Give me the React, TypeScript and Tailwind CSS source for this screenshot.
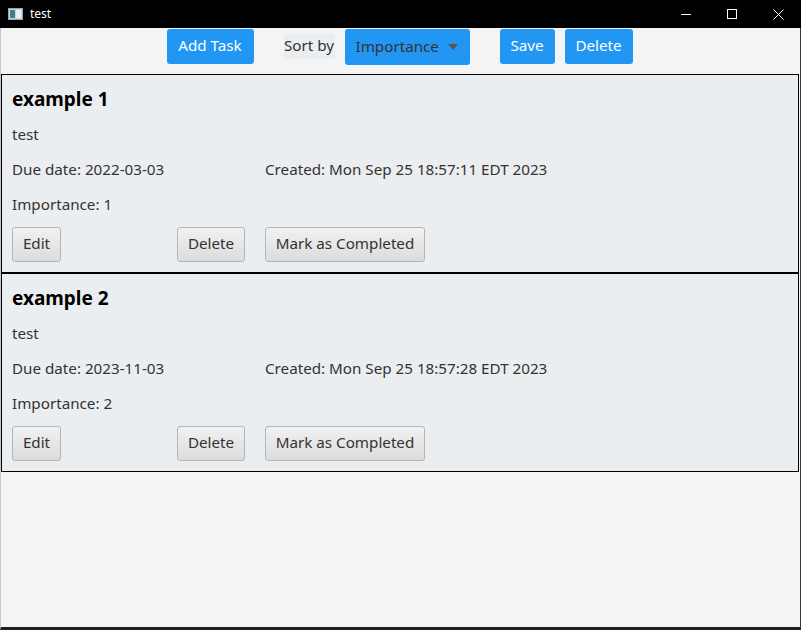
import React from "react";

const font = { fontFamily: '"Noto Sans", "Open Sans", sans-serif' };

function GrayButton({ children, className = "" }: { children: React.ReactNode; className?: string }) {
  return (
    <div
      className={`h-[35px] pb-[2px] flex items-center justify-center whitespace-nowrap rounded-[3px] border border-[#b5b5b5] bg-gradient-to-b from-[#f1f1f1] to-[#dcdcdc] text-[15.2px] text-[#333333] ${className}`}
    >
      {children}
    </div>
  );
}

function Card({ title, due, created, importance }: { title: string; due: string; created: string; importance: number }) {
  return (
    <div className="border border-black bg-[#ebeef1] px-[10px] pt-[8px] pb-[10px]">
      <div className="h-[35px] pb-[3px] flex items-center text-[19px] font-bold text-black">{title}</div>
      <div className="h-[35px] pb-[3px] flex items-center text-[15.2px] text-[#333333]">test</div>
      <div className="h-[35px] pb-[3px] flex items-center text-[15.2px] text-[#333333] whitespace-nowrap">
        <div className="w-[253px]">Due date: {due}</div>
        <div>Created: {created}</div>
      </div>
      <div className="h-[35px] pb-[3px] flex items-center text-[15.2px] text-[#333333]">Importance: {importance}</div>
      <div className="mt-[4px] flex items-center">
        <GrayButton className="w-[49px]">Edit</GrayButton>
        <GrayButton className="w-[68px] ml-[116px]">Delete</GrayButton>
        <GrayButton className="w-[160px] ml-[20px]">Mark as Completed</GrayButton>
      </div>
    </div>
  );
}

export default function App() {
  return (
    <div className="w-[801px] h-[630px] bg-black flex flex-col" style={font}>
      <div className="h-[28px] flex items-center relative text-white">
        <svg className="ml-[8px]" width="15" height="12" viewBox="0 0 15 12">
          <rect x="0.5" y="0.5" width="14" height="11" fill="#cfd6dc" stroke="#9aa4ad" />
          <rect x="2" y="2" width="5" height="8" fill="#3b7f8f" />
          <rect x="8" y="2" width="5" height="8" fill="#e8eef2" />
        </svg>
        <span className="ml-[7px] text-[12px]" style={{ fontFamily: '"Noto Sans", sans-serif' }}>test</span>
        <div className="ml-auto flex items-center h-full">
          <div className="w-[46px] h-full flex items-center justify-center">
            <div className="w-[10px] h-px bg-white" />
          </div>
          <div className="w-[46px] h-full flex items-center justify-center">
            <div className="w-[10px] h-[10px] border border-white" />
          </div>
          <div className="w-[46px] h-full flex items-center justify-center">
            <svg width="11" height="11" viewBox="0 0 11 11">
              <path d="M0.5 0.5 L10.5 10.5 M10.5 0.5 L0.5 10.5" stroke="white" strokeWidth="1" />
            </svg>
          </div>
        </div>
      </div>
      <div className="flex-1 bg-[#f4f4f4] border-l border-[#c6c6c6] border-r border-r-[#3a3a3a] border-b-[3px] border-b-[#1e1e1e] flex flex-col">
        <div className="h-[46px] flex items-start pt-px pr-[2px] justify-center whitespace-nowrap">
          <div className="h-[35px] pb-[2px] w-[87px] mr-[30px] rounded-[3px] bg-[#2196f3] text-white text-[15.2px] flex items-center justify-center">
            Add Task
          </div>
          <div className="mt-[5px] h-[25px] pb-[2px] w-[51px] bg-[#ebeef0] text-[#333333] text-[15.2px] flex items-center justify-center">
            Sort by
          </div>
          <div className="ml-[10px] h-[36px] pb-[2px] w-[125px] rounded-[3px] bg-[#2196f3] text-[#333333] text-[15.2px] flex items-center pl-[11px]">
            Importance
            <svg className="ml-auto mr-[12px] mt-[2px]" width="10" height="6" viewBox="0 0 10 6">
              <path d="M0 0 L10 0 L5 6 Z" fill="#555555" />
            </svg>
          </div>
          <div className="ml-[30px] h-[35px] pb-[2px] w-[55px] rounded-[3px] bg-[#2196f3] text-white text-[15.2px] flex items-center justify-center">
            Save
          </div>
          <div className="ml-[10px] h-[35px] pb-[2px] w-[68px] rounded-[3px] bg-[#2196f3] text-white text-[15.2px] flex items-center justify-center">
            Delete
          </div>
        </div>
        <div className="pr-px">
          <Card title="example 1" due="2022-03-03" created="Mon Sep 25 18:57:11 EDT 2023" importance={1} />
          <Card title="example 2" due="2023-11-03" created="Mon Sep 25 18:57:28 EDT 2023" importance={2} />
        </div>
      </div>
    </div>
  );
}
